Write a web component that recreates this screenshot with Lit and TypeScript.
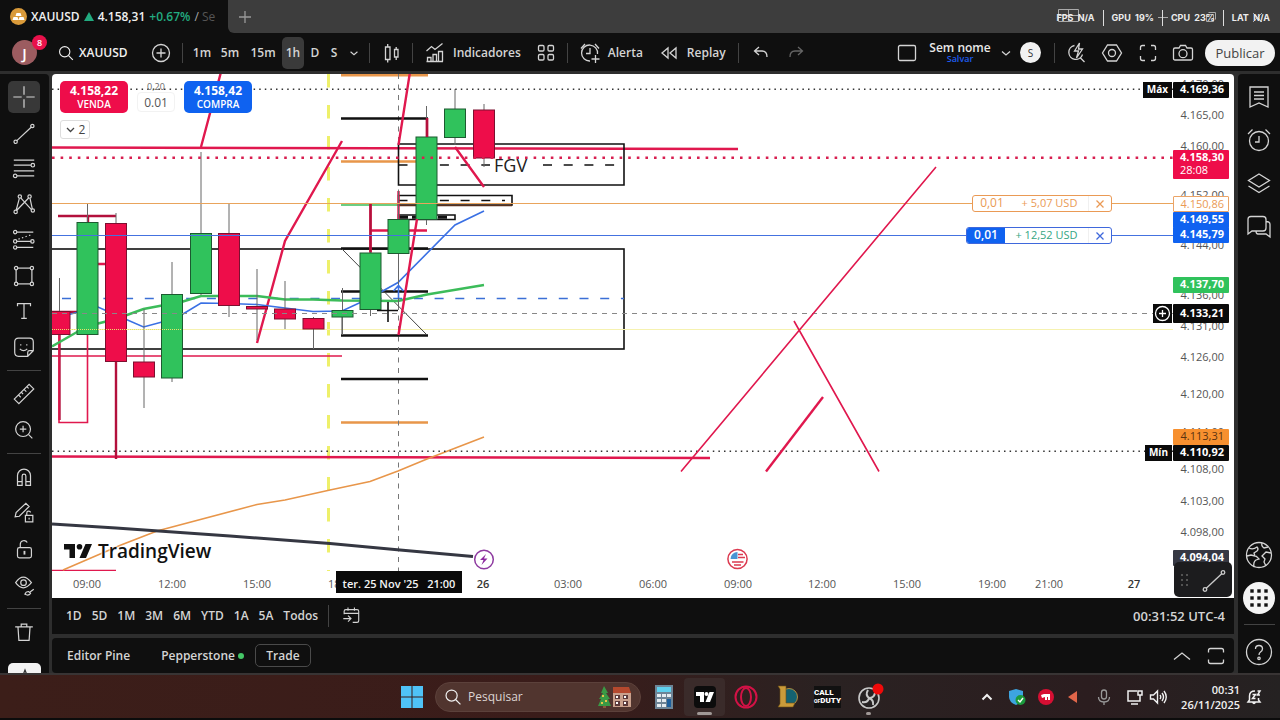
import { LitElement, html, css, svg } from "lit";
import { customElement } from "lit/decorators.js";

/* ---------- shared icon set: 28x28 grid, stroked ---------- */
const ICONS: Record<string, unknown> = {
  search: svg`<circle cx="12.5" cy="12.5" r="6"/><path d="M17 17l5 5"/>`,
  plusCircle: svg`<circle cx="14" cy="14" r="8.5"/><path d="M14 9.5v9M9.5 14h9"/>`,
  chevron: svg`<path d="M10 12.5l4 3.5 4-3.5"/>`,
  chevronUp: svg`<path d="M6 17.5l8-6.5 8 6.5"/>`,
  candles: svg`<path d="M8.500 8h4.500v12.500h-4.500zM10.700 5v3M10.700 20.500v3M17.500 10.500h3.500v7.500h-3.500zM19.200 8v2.500M19.200 18v3"/>`,
  indicators: svg`<path d="M5.500 12l5-4.500 3.500 3 7.500-6M6.500 22.500v-4h3.500v4M12 22.500v-7h3.500v7M17.500 22.500v-10h4v10M5.500 22.500h16.500"/>`,
  templates: svg`<rect x="6.500" y="6.500" width="5.500" height="5.500" rx="1.200"/><rect x="16" y="6.500" width="5.500" height="5.500" rx="1.200"/><rect x="6.500" y="15.500" width="5.500" height="5.500" rx="1.200"/><rect x="16" y="15.500" width="5.500" height="5.500" rx="1.200"/>`,
  alert: svg`<path d="M21.500 15a8 8 0 1 0-7.500 7M14 9v5.500h-4M5 9.500L9 5M19 5l4 4.500M19.500 16v8M15.500 20h8"/>`,
  replay: svg`<path d="M13 9v10l-6-5zM21 9v10l-6-5z"/>`,
  undo: svg`<path d="M12 8l-4.500 4L12 16M8 12h7q5 0 5 6"/>`,
  redo: svg`<path d="M16 8l4.500 4L16 16M20 12h-7q-5 0-5 6"/>`,
  layout: svg`<rect x="5.500" y="6.500" width="17" height="15" rx="1.500"/>`,
  quick: svg`<path d="M12.500 6.500a7 7 0 1 0 8 9M18.500 19l4 4"/><path d="M17.500 4l-5 8h4l-2 7 6-9h-4z"/>`,
  settings: svg`<path d="M9.500 6h9l5 8-5 8h-9l-5-8z"/><circle cx="14" cy="14" r="3.500"/>`,
  full: svg`<path d="M6.500 11V8.500q0-2 2-2H11M17 6.500h2.500q2 0 2 2V11M21.500 17v2.500q0 2-2 2H17M11 21.500H8.500q-2 0-2-2V17"/>`,
  camera: svg`<path d="M6 9h4l1.500-2.500h5L18 9h4q1.500 0 1.500 1.500v9q0 1.500-1.500 1.500H6q-1.500 0-1.500-1.500v-9Q4.500 9 6 9z"/><circle cx="14" cy="14.700" r="4"/>`,
  cross: svg`<path d="M14 2.500v9M14 16.500v9M2.500 14h9M16.500 14h9"/>`,
  plus: svg`<path d="M14 8v12M8 14h12"/>`,
  trend: svg`<path d="M6 22.500L22 7.500"/><circle cx="5" cy="23.500" r="1.800"/><circle cx="23" cy="6.500" r="1.800"/>`,
  fib: svg`<path d="M3 5.500h22M3 11h18.500M3 17h22M6.500 22.500H25"/><circle cx="23.500" cy="11" r="1.900"/><circle cx="4.500" cy="22.500" r="1.900"/>`,
  pattern: svg`<path d="M5.500 21L9 8M10.500 7.500L22 20M19 7.500L6 21M20.500 8l2.500 11.500"/><circle cx="9.500" cy="6" r="1.800"/><circle cx="20" cy="6" r="1.800"/><circle cx="5" cy="22.500" r="1.800"/><circle cx="23.500" cy="21" r="1.800"/>`,
  forecast: svg`<path d="M6 5.500h18M6 15.500h16M6 22h18"/><path stroke-dasharray="1.500 2.500" d="M8 13l15-5"/><circle cx="4.500" cy="5.500" r="1.800"/><circle cx="4.500" cy="15.500" r="1.800"/><circle cx="23" cy="15.500" r="1.800"/><circle cx="4.500" cy="22" r="1.800"/>`,
  shape: svg`<rect x="5.500" y="5.500" width="17" height="17"/><g fill="#0f0f0f"><circle cx="5.500" cy="5.500" r="1.800"/><circle cx="22.500" cy="5.500" r="1.800"/><circle cx="5.500" cy="22.500" r="1.800"/><circle cx="22.500" cy="22.500" r="1.800"/></g>`,
  text: svg`<path d="M7 9V6h14v3M14 6v16M11 22h6"/>`,
  emoji: svg`<path d="M8 4.500h12q4 0 4 4V18l-6 6H8q-4 0-4-4V8.500q0-4 4-4zM24 18h-4q-2 0-2 2v4M10.500 11v1.500M17 11v1.500M9.500 16q4 4 8 0"/>`,
  ruler: svg`<path d="M3.500 19.500L19.500 3.500l5 5L8.500 24.500zM8 15l2.500 2.500M11 12l2 2M14 9l2.500 2.500M17 6l2 2"/>`,
  zoomIn: svg`<circle cx="13" cy="13" r="8"/><path d="M13 9.500v7M9.500 13h7M19 19l4 4"/>`,
  magnet: svg`<path d="M7 23V12.500a7 7 0 0 1 14 0V23h-5V13a2 2 0 0 0-4 0v10zM7 19h5M16 19h5"/>`,
  penLock: svg`<path d="M4.500 18l1-4.500L16 3.500l3.500 3.500L9 17.500zM15.500 16.500h8v7h-8zM17 16v-2q0-2 2-2t2 1.500M19.500 19v2"/>`,
  lock: svg`<rect x="7" y="12.500" width="15" height="11" rx="2"/><path d="M10 12.500V9a4 4 0 0 1 7.500-2"/><path stroke-width="2" d="M14.500 16v4"/>`,
  eye: svg`<path d="M5 11.500q8-12 17 0-9 11-17 0z"/><circle cx="13.500" cy="11.500" r="3"/><path d="M15 24q1-3 4-3l2 2q-2 3-6 1zM20.500 21.500l4-3"/>`,
  trash: svg`<path d="M4.500 8.500h19M11 8V5.500h6V8M7.500 8.500l1 14.500h11l1-14.500"/>`,
  watch: svg`<path d="M5 4h18v20l-9-4-9 4zM9 9h10M9 12.500h10M9 16h10"/>`,
  clock: svg`<circle cx="14" cy="15" r="9.500"/><path d="M14 10v6h-4M3 8l4.500-4.500M20.500 3.500L25 8"/>`,
  layers: svg`<path d="M14 5l10.500 6.500L14 18 3.500 11.500zM3.500 17L14 23.500 24.500 17"/>`,
  chat: svg`<path d="M6 4.500h12q3 0 3 3V16q0 3-3 3H7l-4 3V7.500q0-3 3-3zM21 9.500q4 0 4 3V25l-4-3h-8q-2 0-2-3"/>`,
  globe: svg`<circle cx="14" cy="14" r="12.500"/><path d="M4 7q4 2 8-1 2 2 0 4l-3 2 1 3-4-1-4 1M9 26q-1-5 2-7l3-1-3-3M17 2q-1 3 2 5l4-1M26 12l-5-1-4 4 3 3-1 3 2 4"/>`,
  help: svg`<circle cx="14" cy="14" r="12.500"/><path d="M10.500 11q0-3.500 3.500-3.500t3.500 3.200q0 2-2 3.300-1.500 1-1.500 3"/><circle cx="14" cy="20.300" r="1.200"/>`,
  calendar: svg`<path d="M8 6.500h13q2 0 2 2v11q0 2-2 2h-5M6 12V8.500q0-2 2-2M6 11h17M10.500 4v4M18 4v4M5 17h9M10.500 13.500L14 17l-3.500 3.500"/>`,
  maximize: svg`<path d="M6.500 10.500v-2q0-2 2-2h11q2 0 2 2v2M21.500 17.500v2q0 2-2 2h-11q-2 0-2-2v-2"/>`,
};
const icon = (name: string, size = 28) => html`<svg class="ic" width=${size} height=${size} viewBox="0 0 28 28" aria-hidden="true">${ICONS[name]}</svg>`;

const base = css`
  * { box-sizing: border-box; }
  :host { box-sizing: border-box; font-family: "Open Sans", "Noto Sans", sans-serif; color: #d4d4d4; font-size: 12px; line-height: 16px; }
  button { font: inherit; color: inherit; background: none; border: 0; padding: 0; margin: 0; display: flex; align-items: center; justify-content: center; white-space: nowrap; }
  .ic { fill: none; stroke: currentColor; stroke-width: 1.3; flex: none; display: block; }
`;

/* ---------- window tabs ---------- */
@customElement("tab-strip")
class TabStrip extends LitElement {
  static styles = [base, css`
    :host { display: flex; height: 33px; background: #0f0f0f; position: relative; flex: none; }
    .tab { width: 228px; display: flex; align-items: center; padding-left: 10px; gap: 4px; color: #f0f0f0; font-weight: 600; white-space: nowrap; overflow: hidden; }
    .coin { width: 17px; height: 17px; border-radius: 50%; background: #d99a3a; flex: none; }
    .up { color: #22ab80; font-weight: 600; }
    .fade { color: #555; font-weight: 400; }
    .fade b { color: #aaa; font-weight: 400; }
    .rest { flex: 1; background: #3d3d3d; border-bottom-left-radius: 6px; display: flex; align-items: center; justify-content: space-between; padding: 0 18px 0 3px; color: #999; }
    .controls { display: block; stroke: #aaa; fill: none; }
    .stats { position: absolute; right: 10px; top: 10px; display: flex; gap: 8px; font: 700 9px/16px Inter, sans-serif; color: #ececec; }
    .stats i { width: 1px; background: #ddd; }
  `];
  render() {
    return html`
      <div class="tab">
        <svg class="coin" viewBox="0 0 17 17"><path fill="#fff" d="M6.500 5h4l1 3h-6zM3.500 9h4l1 3h-6zM9.500 9h4l1 3h-6z"/></svg>
        <span>XAUUSD</span>
        <svg width="10" height="9" viewBox="0 0 10 9"><path fill="#22ab80" d="M5 0l5 9H0z"/></svg>
        <span>4.158,31</span><span class="up">+0.67%</span>
        <span class="fade"><b>/</b> Se</span>
      </div>
      <div class="rest">
        <button aria-label="Nova aba">${icon("plus")}</button>
        <svg class="controls" width="206" height="20" viewBox="1056 7 206 20"><path d="M1058.500 9.500h20v12h-20zM1058.500 15.500h20M1068.500 9.500v12M1158 17.500h10M1206.500 14.500h7v7h-7zM1208.500 12.500h7v7M1253 13l9 9M1262 13l-9 9"/></svg>
      </div>
      <div class="stats"><span>FPS&nbsp; N/A</span><i></i><span>GPU&nbsp; 19%</span><i></i><span>CPU&nbsp; 23%</span><i></i><span>LAT&nbsp; N/A</span></div>`;
  }
}

/* ---------- top toolbar ---------- */
@customElement("top-toolbar")
class TopToolbar extends LitElement {
  static styles = [base, css`
    :host { display: flex; align-items: center; height: 38px; padding-top: 1px; background: #0f0f0f; font-weight: 600; flex: none; }
    .avatar { position: relative; width: 25px; height: 25px; margin: 0 29px 0 12px; border-radius: 50%; background: #9c5c60; color: #fff; font-size: 15px; }
    .badge { position: absolute; left: 20px; top: -5px; width: 15px; height: 15px; border-radius: 50%; background: #e8114b; font-size: 9px; line-height: 15px; text-align: center; }
    .symbol { width: 82px; justify-content: flex-start; margin-left: -12px; color: #f0f0f0; gap: 1px; }
    .sep { width: 1px; height: 20px; background: #434343; flex: none; }
    .w16 { width: 16px; } .w22 { width: 22px; } .w24 { width: 24px; } .w28 { width: 28px; } .w30 { width: 30px; } .w36 { width: 36px; } .w38 { width: 38px; } .w42 { width: 42px; }
    .intervals { display: flex; padding: 0 3px 0 5px; }
    .intervals button, .on { height: 32px; }
    .on { background: #3a3a3a; border-radius: 5px; }
    .labelled { gap: 4px; margin: 0 4px 0 8px; }
    .grow { flex: 1; }
    .dim { color: #666; }
    .name { flex-direction: column; width: 70px; line-height: 13px; color: #e8e8e8; }
    .name small { color: #1e5cf0; font-size: 9px; line-height: 10px; }
    .s { width: 21px; height: 21px; border-radius: 50%; background: #f2f2f2; color: #333; font-size: 10px; font-weight: 400; margin: 0 13px 0 3px; }
    .publish { height: 26px; width: 70px; border-radius: 13px; background: #f2f2f2; color: #444; margin: 0 5px 0 8px; font-size: 13px; font-weight: 400; }
    .plus { margin: 0 3px 0 7px; width: 36px; }
    .wide { margin: 0 8px; }
  `];
  render() {
    return html`
      <button class="avatar" aria-label="Perfil">J<span class="badge">8</span></button>
      <button class="symbol">${icon("search", 24)}XAUUSD</button>
      <button class="plus" aria-label="Comparar">${icon("plusCircle")}</button>
      <span class="sep"></span>
      <div class="intervals">
        <button class="w28">1m</button><button class="w28">5m</button><button class="w38">15m</button><button class="w22 on">1h</button>
        <button class="w22">D</button><button class="w16">S</button><button class="w24" aria-label="Intervalos">${icon("chevron", 24)}</button>
      </div>
      <span class="sep"></span>
      <button class="w42" aria-label="Velas">${icon("candles")}</button>
      <span class="sep"></span>
      <button class="labelled">${icon("indicators")}Indicadores</button>
      <button class="w42" aria-label="Modelos">${icon("templates")}</button>
      <span class="sep"></span>
      <button class="labelled">${icon("alert")}Alerta</button>
      <button class="labelled">${icon("replay")}Replay</button>
      <span class="sep wide"></span>
      <button class="w28" aria-label="Desfazer">${icon("undo")}</button>
      <button class="w42 dim" aria-label="Refazer">${icon("redo")}</button>
      <span class="grow"></span>
      <button class="w36" aria-label="Layout">${icon("layout")}</button>
      <button class="name">Sem nome<small>Salvar</small></button>
      <button class="w22" aria-label="Layouts">${icon("chevron")}</button>
      <button class="s">S</button>
      <span class="sep"></span>
      <button class="w42" aria-label="Busca rápida">${icon("quick")}</button>
      <button class="w30" aria-label="Configurações">${icon("settings")}</button>
      <button class="w42" aria-label="Tela cheia">${icon("full")}</button>
      <button class="w28" aria-label="Captura">${icon("camera")}</button>
      <button class="publish">Publicar</button>`;
  }
}

/* ---------- drawing tools (left) ---------- */
@customElement("draw-rail")
class DrawRail extends LitElement {
  static styles = [base, css`
    :host { display: flex; flex-direction: column; width: 49px; background: #0f0f0f; padding-top: 5px; overflow: hidden; border-top-right-radius: 4px; }
    button { height: 36px; width: 48px; flex: none; }
    .first { display: flex; flex-direction: column; justify-content: space-between; flex: none; height: 286px; padding: 2px 0; }
    .first button { height: 32px; }
    .first .sel { width: 32px; margin-left: 8px; background: #383838; border-radius: 5px; }
    hr { width: 34px; margin: 5px 0 5px 7px; border: 0; height: 1px; background: #434343; flex: none; }
    .tip { width: 33px; height: 36px; margin: 13px 0 0 8px; background: #f2f2f2; color: #333; border-radius: 5px; align-items: flex-start; }
  `];
  render() {
    const b = (n: string, size = 26) => html`<button aria-label=${n}>${icon(n, size)}</button>`;
    return html`
      <div class="first"><button class="sel" aria-label="Cruz">${icon("cross", 26)}</button>
        ${["trend", "fib", "pattern", "forecast", "shape", "text", "emoji"].map((n) => b(n))}</div>
      <hr>${b("ruler")}${b("zoomIn")}
      <hr>${b("magnet")}${b("penLock")}${b("lock")}${b("eye")}
      <hr>${b("trash")}
      <button class="tip" aria-label="Marcador"><svg class="ic" width="16" height="16"><path d="M5 15l3-8 3 8M6 12h4"/></svg></button>`;
  }
}

/* ---------- widget bar (right) ---------- */
@customElement("widget-rail")
class WidgetRail extends LitElement {
  static styles = [base, css`
    :host { display: flex; flex-direction: column; width: 42px; background: #0f0f0f; padding-top: 1px; border-top-left-radius: 4px; }
    button { height: 43px; flex: none; }
    .grow { flex: 1; }
    hr { width: 31px; margin: 5px auto; border: 0; height: 1px; background: #434343; }
    .apps { display: block; }
  `];
  render() {
    return html`
      ${["watch", "clock", "layers", "chat"].map((n) => html`<button aria-label=${n}>${icon(n, 28)}</button>`)}
      <span class="grow"></span>
      <button aria-label="Comunidade">${icon("globe")}</button>
      <button aria-label="Produtos"><svg class="apps" width="32" height="32"><circle cx="16" cy="16" r="16" fill="#f4f4f4"/>
        ${[9, 16, 23].map((y) => [9, 16, 23].map((x) => svg`<rect x=${x - 1.7} y=${y - 1.7} width="3.400" height="3.400" fill="#111"/>`))}</svg></button>
      <hr><button aria-label="Ajuda">${icon("help")}</button>`;
  }
}

/* ---------- chart ---------- */
const OX = 52, OY = 74;
type Candle = [cx: number, top: number, bottom: number, high: number, low: number, up: boolean];
const CANDLES: Candle[] = [
  [59.5, 311.5, 334.5, 278, 334, false], [87.5, 222.5, 334.5, 204, 334, true], [116, 223.5, 361.5, 213, 362, false],
  [144, 362, 377, 309, 408, false], [172, 294.5, 378, 262, 382, true], [201, 233.5, 293.5, 152, 295, true],
  [229, 233.5, 305.5, 204, 317, false], [257, 306.5, 309, 269, 340, false], [285, 309, 319, 281, 329, false],
  [313.5, 318.5, 329, 317, 349, false], [342.5, 310.5, 317, 288, 335, true], [370.5, 253, 309.5, 204, 316, true],
  [398.5, 219.5, 253.5, 191, 305, true], [426.5, 137, 219.5, 106, 225, true], [455, 109, 137.5, 89, 145, true],
  [484, 110, 158, 104, 167, false],
];
const TICKS: [string, number][] = [
  ["4.170,00", 84], ["4.165,00", 115], ["4.160,00", 146], ["4.152,00", 195], ["4.144,00", 245], ["4.136,00", 295], ["4.131,00", 326],
  ["4.126,00", 357], ["4.120,00", 394], ["4.114,00", 432], ["4.108,00", 469], ["4.103,00", 501], ["4.098,00", 532],
];
const TAGS: [string, number, string][] = [
  ["4.169,36", 82, "black"], ["4.150,86", 196, "outline"], ["4.149,55", 212, "blue"], ["4.145,79", 227, "blue"], ["4.137,70", 277, "green"],
  ["4.113,31", 429, "orange"], ["4.110,92", 445, "black"], ["4.094,04", 550, "slate"],
];
const TIMES: [string, number, boolean?][] = [
  ["09:00", 87], ["12:00", 172], ["15:00", 257], ["18:00", 342], ["26", 483, true], ["03:00", 568], ["06:00", 653], ["09:00", 738],
  ["12:00", 822], ["15:00", 907], ["19:00", 992], ["21:00", 1049], ["27", 1134, true],
];

@customElement("price-chart")
class PriceChart extends LitElement {
  static styles = [base, css`
    :host { display: grid; grid-template: minmax(0, 1fr) 27px / minmax(0, 1fr) 61px; position: relative; background: #fff; border-radius: 4px 4px 0 0; overflow: hidden; color: #444; font-size: 11px; }
    .plot, .axis, .time { position: relative; overflow: hidden; }
    .time { grid-column: 1 / 3; }
    svg.canvas { position: absolute; inset: 0; width: 100%; height: 100%; display: block; }
    .thin { fill: none; stroke-width: 1; } .mid { fill: none; stroke-width: 1.6; } .bold { fill: none; stroke-width: 2.4; } .heavy { fill: none; stroke-width: 3; }
    .pink { stroke: #e0184e; } .wine { stroke: #b3103c; } .blk { stroke: #111; } .org { stroke: #e8964a; } .blu { stroke: #3a70e4; } .grn { stroke: #3cbc5a; } .gry { stroke: #777; }
    .yel { stroke: #eef06a; }
    .fgv { font-size: 18px; fill: #222; }
    .tick, .tag { position: absolute; white-space: nowrap; }
    .tick { right: 10px; line-height: 16px; color: #555; }
    .tag { left: 0; width: 56px; height: 16px; line-height: 14px; padding-right: 5px; text-align: right; border-radius: 1px; font-weight: 700; color: #fff; }
    .black { background: #0a0a0a; } .blue { background: #0f62f0; } .green { background: #30c25c; } .slate { background: #363843; }
    .orange { background: #f7902f; color: #5a3210; font-weight: 400; }
    .outline { background: #fff; border: 1px solid #eba467; color: #ea9a55; font-weight: 400; line-height: 13px; padding-right: 4px; }
    .last { background: #ee0d4a; height: 29px; line-height: 14px; }
    .last small { display: block; font-size: 11px; font-weight: 400; text-align: left; padding-left: 7px; line-height: 12px; }
    .cursor { height: 19px; line-height: 18px; }
    .side { position: absolute; right: 1px; height: 16px; line-height: 15px; padding: 0 4px; color: #fff; background: #0a0a0a; font-weight: 700; font-size: 10px; }
    .side.add { height: 19px; width: 19px; padding: 0; }
    .order { position: absolute; right: 61px; display: flex; align-items: stretch; height: 17px; border: 1px solid; border-radius: 3px; background: #fff; font-size: 11px; line-height: 14px; overflow: hidden; }
    .plot .order { right: 61px; }
    .order span { text-align: center; }
    .order .qty { width: 38px; font-size: 12px; } .order .pl { width: 77px; } .order button { width: 23px; border-left: 1px solid #f0f0f0; }
    .order.a { color: #ea9a55; } .order.b { color: #3f68dc; }
    .order.b .qty { background: #0f62f0; color: #fff; font-weight: 600; } .order.b .pl { color: #35a583; width: 83px; }
    .trade { position: absolute; left: 8px; top: 7px; display: flex; gap: 9px; }
    .deal { width: 68px; height: 32px; border-radius: 5px; color: #fff; font-weight: 700; flex-direction: column; font-size: 12px; line-height: 14px; }
    .deal small { font-size: 10px; line-height: 12px; font-weight: 600; }
    .sell { background: #ee0d4a; } .buy { background: #0f62f0; }
    .lots { display: flex; flex-direction: column; width: 38px; text-align: center; color: #666; font-size: 9px; line-height: 11px; }
    .lots input { width: 38px; height: 20px; padding: 0; border: 1px solid #f2f2f2; border-radius: 4px; background: #fff; text-align: center; font: 12px "Open Sans", sans-serif; color: #555; }
    .count { position: absolute; left: 8px; top: 46px; width: 30px; height: 19px; border: 1px solid #ddd; border-radius: 3px; background: #fff; font-size: 12px; color: #444; }
    .brand { position: absolute; left: 12px; bottom: 8px; display: flex; align-items: center; gap: 6px; font: 600 19px/24px "Open Sans", sans-serif; color: #111; text-shadow: 0 0 2px #fff, 0 0 2px #fff, 0 0 2px #fff; }
    .hour { position: absolute; top: 4px; width: 60px; margin-left: -30px; text-align: center; line-height: 18px; color: #555; }
    .day { font-weight: 600; color: #333; }
    .when { position: absolute; top: 0; width: 126px; height: 22px; background: #0a0a0a; color: #f4f4f4; line-height: 26px; font-weight: 600; text-align: center; white-space: pre; }
    .float { position: absolute; right: 2px; bottom: 1px; width: 58px; height: 35px; border-radius: 5px; background: #1c1c1e; color: #ccc; display: flex; align-items: center; justify-content: space-around; }
  `];

  private drawings() {
    const far = 4000;
    return svg`
      <rect x="-10" y="249" width="634" height="100" fill="#fdfdfe" class="mid blk"/>
      <path class="heavy yel" stroke-dasharray="13.500 17.500" d="M328.500 74V571"/>
      <path class="thin" stroke="#f6f2b0" d="M52 329.500H${far}"/>
      <path class="heavy org" d="M341 75H428"/><path class="bold org" d="M341 161.500H417M341 422.500H428"/>
      <path class="thin gry" stroke-dasharray="5 5.500" d="M398.500 74V571"/>
      <path class="bold pink" d="M52 147.500L738 149"/>
      <path class="bold pink" d="M52 456.500L710 458"/>
      <path class="mid pink" d="M52 356H342M52 570.500H116"/>
      <path class="bold wine" d="M59.500 334V420M116 361V459M58 216H116M88 216V224M427 118V138M52 312H77"/>
      <path class="mid pink" d="M59 334V422.500H87.500V334"/>
      <path class="mid" stroke="#3b6fd6" stroke-dasharray="9 11.700" d="M62 298.500H624"/>
      <path class="mid blk" d="M398.500 144H624V185H398.500zM398.500 195.500H512V205H398.500z"/>
      <path class="mid blk" stroke-dasharray="9 11.700" d="M398.500 165H490M543 165H620M398.500 200.500H505"/>
      <path class="mid" stroke="#58301c" d="M398 205.500H512"/><path class="mid grn" d="M341 205H398"/>
      <path class="mid blk" d="M398.500 215H455V219.500H398.500z"/><path class="heavy blk" stroke-dasharray="9 4" d="M399 217.300H450"/>
      <path class="bold blk" d="M341 118.500H428M341 248.500H428M341 291.500H428M341 335.500H428M341 379H428"/>
      <path class="thin" stroke="#444" d="M342 249L427 335M342 317V335"/>
      <path class="bold pink" d="M98 264H106M201 147L221 72M257 343L285 241 342 141M398.500 145L410 72M455 147L484 187M370.500 204V253M370 230.500H427M398.500 191V220"/>
      <polyline class="mid blu" points="52,318 67,315 98,307 116,315 143.500,327 162,322 183,314 201,303 229,303.500 257,304.500 285,308 313,311.500 342,311 370,298 398,282.500 455,225 484,211"/>
      <polyline class="bold grn" points="52,346.500 77,332 98,323.500 116,319 143.500,309 162,305.500 183,301.500 201,296 257,296 285,299.500 313,299.500 342,300.500 398,301 427,294.500 484,285"/>
      <polyline class="mid org" points="63,570 121,545 157,531 257,504.500 285,500 330,490 370,481.500 398,471 427,459 484,437"/>
      <polyline class="heavy" stroke="#353742" points="52,524 116,528 230,536 330,543.500 400,550 473,556.500"/>
      ${CANDLES.map(([x, t, b, h, l, up]) => svg`<path class="thin" stroke="#666" d="M${x} ${h}V${l}"/>
        <rect x=${x - 10.5} y=${t} width="21" height=${b - t} fill=${up ? "#30c25c" : "#ee0d4a"} stroke=${up ? "#1c5a30" : "#7c1030"}/>`)}
      <path class="bold wine" d="M370.500 204V252M427 118V137"/>
      <path class="bold pink" d="M398.500 335L417 219"/>
      <path class="thin" stroke="#e8e36a" stroke-dasharray="1 1" d="M52 329.500H182"/>
      <path stroke-width="2.600" stroke="#d81f50" stroke-dasharray="2.600 6" d="M52 157.700H${far}"/>
      <path class="thin" stroke="#e9a45c" d="M52 203.500H${far}"/>
      <path class="thin" stroke="#4472e0" d="M52 235.500H${far}"/>
      <path class="thin" stroke="#888" stroke-dasharray="5 5" d="M52 313.500H${far}"/>
      <path class="mid" stroke="#333" stroke-dasharray="1.500 4.100" d="M52 89.300H${far}M52 451.300H${far}"/>
      <path class="mid blu" d="M398.500 298V286M393.500 291L398.500 285.500 403.500 291"/>
      <path class="mid blk" d="M377 310.500H398M388 302V322"/>
      <path class="mid pink" d="M681 471.500L936 167M794 321L879 471.500"/><path class="bold pink" d="M766 471.500L823 397"/>
      <text class="fgv" x="494" y="172">FGV</text>
      <circle cx="484" cy="559.500" r="9.300" fill="#fff" stroke="#8e3aa0" stroke-width="1.500"/><path fill="#8e2aa0" d="M486 554l-6 6h3.500l-2 5 6-6.500h-3.500z"/>
      <circle cx="737.500" cy="559" r="9.600" fill="#fff" stroke="#dc3a50" stroke-width="1.500"/><path fill="#4a94d4" d="M737.500 552v7h-7a7 7 0 0 1 7-7z"/>
      <path stroke="#dc3a50" stroke-width="1.500" d="M738 554.500h5M738 557.500h7M732 562h11.500M734 565h7"/>`;
  }

  render() {
    const order = (cls: string, top: number, pl: string) => html`<div class="order ${cls}" style="top:${top - OY}px"><span class="qty">0,01</span><span class="pl">${pl}</span>
      <button aria-label="Fechar"><svg class="ic" width="10" height="10"><path d="M1.500 1.500l7 7M8.500 1.500l-7 7"/></svg></button></div>`;
    return html`
      <div class="plot">
        <svg class="canvas"><g transform="translate(${-OX} ${-OY})">${this.drawings()}</g></svg>
        <div class="trade">
          <button class="deal sell">4.158,22<small>VENDA</small></button>
          <label class="lots">0,20<input value="0.01" aria-label="Lotes"></label>
          <button class="deal buy">4.158,42<small>COMPRA</small></button>
        </div>
        <button class="count"><svg class="ic" width="14" height="14"><path d="M2 5l3.500 3.500L9 5"/></svg>2</button>
        ${order("a", 195, "+ 5,07 USD")}${order("b", 227, "+ 12,52 USD")}
        <span class="side" style="top:${82 - OY}px">Máx</span>
        <span class="side" style="top:${445 - OY}px">Mín</span>
        <button class="side add" style="top:${304 - OY}px" aria-label="Adicionar"><svg class="ic" width="17" height="17"><circle cx="8.500" cy="8.500" r="7"/><path d="M8.500 5v7M5 8.500h7"/></svg></button>
        <div class="brand"><svg width="28" height="15" viewBox="0 0 28 15"><path fill="#111" d="M0 0h11v14H5.500V5.500H0zM21.500 0H28l-6 14h-6.500z"/><circle cx="15.500" cy="2.800" r="2.800" fill="#111"/></svg>TradingView</div>
      </div>
      <div class="axis">
        ${TICKS.map(([t, y]) => html`<span class="tick" style="top:${y - 8 - OY}px">${t}</span>`)}
        ${TAGS.map(([t, y, c]) => html`<span class="tag ${c}" style="top:${y - OY}px">${t}</span>`)}
        <span class="tag last" style="top:${150 - OY}px">4.158,30<small>28:08</small></span>
        <span class="tag black cursor" style="top:${304 - OY}px">4.133,21</span>
      </div>
      <div class="time">
        ${TIMES.map(([t, x, d]) => html`<span class="hour ${d ? "day" : ""}" style="left:${x - OX}px">${t}</span>`)}
        <span class="when" style="left:${336 - OX}px">ter. 25 Nov '25   21:00</span>
      </div>
      <div class="float"><svg width="12" height="16">${[3, 8, 13].map((y) => svg`<circle cx="3" cy=${y} r="1" fill="#666"/><circle cx="8" cy=${y} r="1" fill="#666"/>`)}</svg>${icon("trend")}</div>`;
  }
}

/* ---------- range bar and bottom panel ---------- */
@customElement("range-bar")
class RangeBar extends LitElement {
  static styles = [base, css`
    :host { display: flex; align-items: center; height: 36px; flex: none; background: #0f0f0f; padding: 0 9px 0 14px; gap: 10px; font-weight: 600; }
    .sep { width: 1px; height: 22px; background: #434343; }
    .grow { flex: 1; }
    .clock { font-size: 13px; }
  `];
  render() {
    return html`${["1D", "5D", "1M", "3M", "6M", "YTD", "1A", "5A", "Todos"].map((t) => html`<button>${t}</button>`)}
      <span class="sep"></span><button aria-label="Ir para">${icon("calendar", 24)}</button><span class="grow"></span><button class="clock">00:31:52 UTC-4</button>`;
  }
}

@customElement("bottom-panel")
class BottomPanel extends LitElement {
  static styles = [base, css`
    :host { display: flex; align-items: center; height: 35px; flex: none; background: #0f0f0f; border-radius: 4px; padding: 0 4px 0 15px; font-weight: 600; }
    .broker { margin: 0 11px 0 31px; gap: 3px; }
    .dot { width: 6px; height: 6px; border-radius: 50%; background: #45c767; }
    .trade { width: 56px; height: 23px; border: 1px solid #4a4a4a; border-radius: 5px; }
    .grow { flex: 1; }
    .tools { display: flex; gap: 6px; }
  `];
  render() {
    return html`<button>Editor Pine</button><button class="broker">Pepperstone<span class="dot"></span></button><button class="trade">Trade</button>
      <span class="grow"></span><div class="tools"><button aria-label="Abrir">${icon("chevronUp")}</button><button aria-label="Maximizar">${icon("maximize")}</button></div>`;
  }
}

/* ---------- desktop task bar ---------- */
@customElement("task-bar")
class TaskBar extends LitElement {
  static styles = [base, css`
    :host { display: grid; grid-template-columns: 1fr auto 1fr; align-items: center; height: 47px; flex: none; border-top: 2px solid #383434; border-bottom: 2px solid #0c0c0c; background: linear-gradient(90deg, #3c1e19, #3a1c1a 45%, #2a2222 65%, #2b1d1f 85%, #252222); color: #f0f0f0; }
    .apps { grid-column: 2; display: flex; align-items: center; padding-left: 10px; }
    .search { width: 206px; height: 30px; margin: 0 2px 0 12px; border-radius: 15px; background: #51352f; border: 1px solid #5c413b; display: flex; align-items: center; gap: 2px; padding: 0 7px 0 4px; }
    .search input { flex: 1; min-width: 0; background: none; border: 0; padding: 0; color: #ddd; font: 12px "Open Sans", sans-serif; }
    .search input::placeholder { color: #dcd4d2; }
    .app { width: 41px; height: 38px; position: relative; }
    .active { background: #3a2b2a; border-radius: 4px; }
    .active::after, .open::after { content: ""; position: absolute; bottom: 1px; width: 15px; height: 3px; border-radius: 2px; background: #a09896; }
    .open::after { width: 5px; }
    .cod { font: 900 8px/8px Roboto, sans-serif; text-align: left; background: #111; color: #fff; padding: 3px 0 3px 0; display: block; }
    .cod small { font-size: 5px; }
    .tray { display: flex; align-items: center; justify-content: flex-end; padding-right: 18px; gap: 11px; }
    .time { font-size: 11px; line-height: 15px; text-align: right; font-weight: 600; }
    .bell { margin-left: -5px; }
    .net { display: flex; gap: 5px; margin-right: 3px; }
    .more { margin-right: 3px; }
  `];
  render() {
    return html`
      <div class="apps">
        <button aria-label="Iniciar"><svg width="22" height="22"><path fill="#4fc3f7" d="M0 0h10.500v10.500H0zM11.500 0H22v10.500H11.500zM0 11.500h10.500V22H0zM11.500 11.500H22V22H11.500z"/></svg></button>
        <label class="search">${icon("search", 26)}<input type="search" placeholder="Pesquisar" aria-label="Pesquisar">
          <svg width="36" height="24"><path fill="#3a9a45" d="M7 1l4 7H9l4 6h-2l3 7H1l3-7H2l4-6H4z"/><path fill="#e8c34a" d="M5 10h2v2H5zM8 15h2v2H8zM4 17h2v2H4z"/><path fill="#8a5a3a" d="M6 21h3v2H6z"/><path fill="#b5492e" d="M16 2h16l2 6H16z"/><path fill="#c9a08c" d="M16 8h18v14H16z"/><path fill="#5c3a3a" d="M18 10h5v4h-5zM26 10h5v4h-5zM18 16h5v5h-5zM26 16h5v5h-5z"/><path fill="#fff" d="M19 11h2v2h-2zM27 11h2v2h-2zM19 17h2v2h-2zM27 17h2v2h-2z"/></svg></label>
        <button class="app" aria-label="Calculadora"><svg width="18" height="24"><path fill="#6d8496" d="M0 0h18v24H0z"/><path fill="#5fd0ee" d="M2 2h14v5H2z"/><path fill="#e4ebf0" d="M2 9h4v3H2zM7 9h4v3H7zM12 9h4v3h-4zM2 14h4v3H2zM7 14h4v3H7zM2 19h4v3H2zM7 19h4v3H7z"/><path fill="#1d5f9c" d="M12 14h4v8h-4z"/></svg></button>
        <button class="app active" aria-label="TradingView"><svg width="22" height="22"><rect width="22" height="22" rx="4" fill="#0c0c0c"/><path fill="#fff" d="M2 6h8v10H6v-6H2zM15.500 6H20l-4 10h-4.500z"/><circle cx="12.500" cy="8" r="2" fill="#fff"/></svg></button>
        <button class="app" aria-label="Opera"><svg width="24" height="24" fill="none" stroke="#d31246"><circle cx="12" cy="12" r="10.500" stroke-width="2"/><ellipse cx="12" cy="12" rx="5" ry="9" stroke-width="2"/></svg></button>
        <button class="app" aria-label="League"><svg width="22" height="24"><circle cx="13" cy="12" r="8.500" fill="#146270" stroke="#b08d3e"/><path fill="#c99b3a" stroke="#6d4f16" stroke-width=".6" d="M2 1h8v17h9l-2 4H2l2-3V4z"/></svg></button>
        <button class="app" aria-label="Call of Duty"><span class="cod">CALL<br><small>OF</small>DUTY</span></button>
        <button class="app open" aria-label="OBS"><svg width="30" height="28"><circle cx="15" cy="15" r="10" fill="#262223" stroke="#c8c8c8" stroke-width="1.600"/><path fill="none" stroke="#c8c8c8" stroke-width="2" d="M14 7q-3 5 1 8 5 0 6-5M15 15q-1 5-7 4M15 15q5 2 4 7"/><circle cx="24" cy="6" r="5.500" fill="#f00a0a"/></svg></button>
      </div>
      <div class="tray">
        <svg class="ic more" width="14" height="14"><path stroke-width="2" d="M2.500 9.500L7 5l4.500 4.500"/></svg>
        <svg width="18" height="18"><path fill="#3da4e0" d="M8 1l7 2v6q0 5-7 8-7-3-7-8V3z"/><circle cx="12.500" cy="12" r="5" fill="#1b9a3c"/><path fill="none" stroke="#fff" stroke-width="1.400" d="M10 12l2 2 3-4"/></svg>
        <svg width="18" height="18"><circle cx="9" cy="9" r="8" fill="#d60f33"/><path fill="#fff" d="M4 7l3-1h6v6h-2v-3h-1v3H8V9l-3 1z"/></svg>
        <svg width="16" height="18"><path fill="#e0664a" d="M2 9l9-6v12z"/></svg>
        <svg class="ic" width="22" height="20"><g stroke="#999"><rect x="8.500" y="3" width="5" height="9" rx="2.500"/><path d="M5.500 10q0 5 5.500 5t5.500-5M11 15v3"/></g></svg>
        <div class="net">
          <svg class="ic" width="18" height="18"><path stroke-width="1.500" d="M11 3H2v10h12V9M5 16h7M12 3h4v4h-4zM14 7v2"/></svg>
          <svg class="ic" width="18" height="18"><path stroke-width="1.400" d="M1.500 7h3l4-4v12l-4-4h-3zM11 7q1.500 2 0 4M13 5q3 4 0 8M15 3q4.500 6 0 12"/></svg>
        </div>
        <div class="time">00:31<br>26/11/2025</div>
        <svg class="ic bell" width="16" height="16"><path stroke-width="1.500" d="M9 2Q3.500 2 3.500 7v4L2 13h12l-1.500-2V9M6.500 13q1.500 3 3 0M6.500 5.500h3l-3 4h3M11.500 2H14l-2.500 4H14"/></svg>
      </div>`;
  }
}

@customElement("app-root")
class AppRoot extends LitElement {
  static styles = css`
    :host { display: flex; flex-direction: column; height: 100vh; min-height: 600px; background: #2e2e2e; overflow: hidden; }
    .main { flex: 1; min-height: 0; display: flex; padding-top: 3px; gap: 3px; }
    .center { flex: 1; min-width: 0; display: flex; flex-direction: column; margin-right: 1px; }
    price-chart { flex: 1; min-height: 0; }
    bottom-panel { margin-top: 4px; }
  `;
  render() {
    return html`<tab-strip></tab-strip><top-toolbar></top-toolbar>
      <div class="main"><draw-rail></draw-rail>
        <div class="center"><price-chart></price-chart><range-bar></range-bar><bottom-panel></bottom-panel></div>
        <widget-rail></widget-rail></div>
      <task-bar></task-bar>`;
  }
}
